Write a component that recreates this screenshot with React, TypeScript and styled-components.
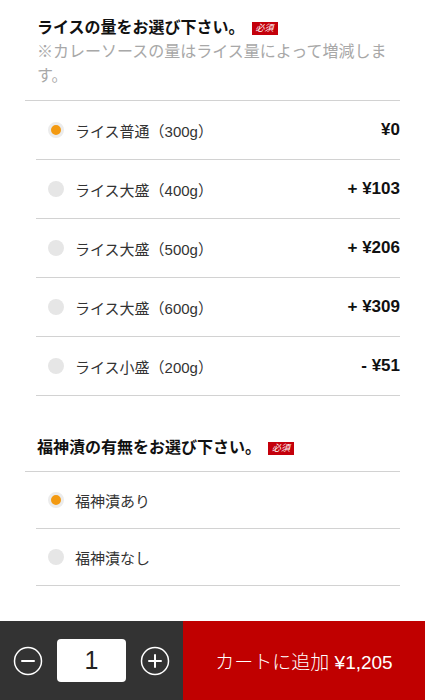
import styled, { createGlobalStyle } from 'styled-components';

type OptionType = {
  label: string
  price: string
}

const riceOptions: OptionType[] = [
  { label: 'ライス普通（300g）', price: '¥0' },
  { label: 'ライス大盛（400g）', price: '+ ¥103' },
  { label: 'ライス大盛（500g）', price: '+ ¥206' },
  { label: 'ライス大盛（600g）', price: '+ ¥309' },
  { label: 'ライス小盛（200g）', price: '- ¥51' },
];

const pickleOptions: OptionType[] = [
  { label: '福神漬あり', price: '' },
  { label: '福神漬なし', price: '' },
];

const MinusIcon = () => (
  <svg width="30" height="30" viewBox="0 0 30 30" fill="none">
    <circle cx="15" cy="15" r="13.5" stroke="#fff" strokeWidth="1.5" />
    <line x1="9" y1="15" x2="21" y2="15" stroke="#fff" strokeWidth="2" strokeLinecap="round" />
  </svg>
);

const PlusIcon = () => (
  <svg width="30" height="30" viewBox="0 0 30 30" fill="none">
    <circle cx="15" cy="15" r="13.5" stroke="#fff" strokeWidth="1.5" />
    <line x1="9" y1="15" x2="21" y2="15" stroke="#fff" strokeWidth="2" strokeLinecap="round" />
    <line x1="15" y1="9" x2="15" y2="21" stroke="#fff" strokeWidth="2" strokeLinecap="round" />
  </svg>
);

export default function App() {
  return (
    <>
      <GlobalStyle />
      <Page>
        <Content>
          <Section>
            <Header>
              <Title>
                ライスの量をお選び下さい。<Badge>必須</Badge>
              </Title>
              <Note>※カレーソースの量はライス量によって増減します。</Note>
            </Header>
            <OptionList>
              {riceOptions.map((o, i) => (
                <Option key={o.label} $height={58}>
                  <Radio $checked={i === 0} />
                  <Label>{o.label}</Label>
                  <Price>{o.price}</Price>
                </Option>
              ))}
            </OptionList>
          </Section>
          <Section $spaced>
            <Header>
              <Title>
                福神漬の有無をお選び下さい。<Badge>必須</Badge>
              </Title>
            </Header>
            <OptionList>
              {pickleOptions.map((o, i) => (
                <Option key={o.label} $height={56}>
                  <Radio $checked={i === 0} />
                  <Label>{o.label}</Label>
                </Option>
              ))}
            </OptionList>
          </Section>
        </Content>
        <Footer>
          <Counter>
            <RoundButton aria-label="減らす">
              <MinusIcon />
            </RoundButton>
            <Quantity>1</Quantity>
            <RoundButton aria-label="増やす">
              <PlusIcon />
            </RoundButton>
          </Counter>
          <CartButton>カートに追加 ¥1,205</CartButton>
        </Footer>
      </Page>
    </>
  );
}

const GlobalStyle = createGlobalStyle`
   body {
      margin: 0;
      background: #fff;
      font-family: "Liberation Sans", "Noto Sans CJK JP", sans-serif;
      color: #222;
   }
`
const Page = styled.div`
   min-height: 100vh;
   display: flex;
   flex-direction: column;
`
const Content = styled.div`
   flex: 1;
`
const Section = styled.section<{ $spaced?: boolean }>`
   margin: 0 25px;
   padding-top: ${p => (p.$spaced ? '40px' : '16px')};
`
const Header = styled.div`
   padding: 0 0 11px 12px;
   border-bottom: 1px solid #d2d2d2;
`
const Title = styled.h2`
   margin: 0;
   font-size: 16px;
   line-height: 24px;
   font-weight: 700;
   color: #111;
   display: flex;
   align-items: center;
`
const Badge = styled.span`
   margin-left: 7px;
   background: #c4000b;
   color: #fff;
   font-size: 9px;
   line-height: 13px;
   font-weight: 400;
   padding: 0 4px;
   font-style: italic;
`
const Note = styled.p`
   margin: 0 0 1px;
   font-size: 16px;
   line-height: 24px;
   color: #a8a8a8;
`
const OptionList = styled.div`
   margin-left: 11px;
`
const Option = styled.label<{ $height: number }>`
   height: ${p => p.$height}px;
   display: flex;
   align-items: center;
   padding-left: 12px;
   border-bottom: 1px solid #d2d2d2;
   cursor: pointer;
`
const Radio = styled.span<{ $checked: boolean }>`
   width: 16px;
   height: 16px;
   border-radius: 50%;
   flex-shrink: 0;
   box-sizing: border-box;
   background: ${p => (p.$checked ? '#f39a12' : '#e6e6e6')};
   border: ${p => (p.$checked ? '3px solid #ececec' : 'none')};
`
const Label = styled.span`
   margin-left: 11px;
   font-size: 15px;
   color: #333;
   flex: 1;
`
const Price = styled.span`
   font-size: 17px;
   font-weight: 700;
   color: #111;
`
const Footer = styled.footer`
   height: 79px;
   display: flex;
`
const Counter = styled.div`
   width: 183px;
   background: #333;
   display: flex;
   align-items: center;
   padding: 0 13px;
   gap: 14px;
   box-sizing: border-box;
`
const RoundButton = styled.button`
   width: 30px;
   height: 30px;
   padding: 0;
   border: none;
   background: none;
   display: flex;
   cursor: pointer;
`
const Quantity = styled.div`
   width: 69px;
   height: 43px;
   background: #fff;
   border-radius: 4px;
   display: flex;
   align-items: center;
   justify-content: center;
   font-size: 25px;
   font-weight: 300;
   color: #222;
`
const CartButton = styled.button`
   flex: 1;
   border: none;
   background: #c00000;
   color: #fff;
   font-family: inherit;
   font-size: 19px;
   font-weight: 300;
   cursor: pointer;
`
